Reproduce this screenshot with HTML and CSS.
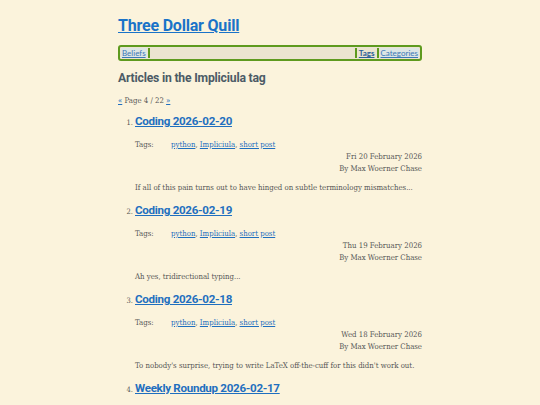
FILE: index.html
```html
<!DOCTYPE html>
<html>
<head>
<meta charset="utf-8">
<link rel="stylesheet" href="styles.css">
</head>
<body>
<div class="page">
  <header class="site-head">
    <h1 class="site-title"><a href="#">Three Dollar Quill</a></h1>
    <nav class="nav">
      <a class="nav-link" href="#">Beliefs</a>
      <span class="sep"></span>
      <span class="spacer"></span>
      <span class="sep"></span>
      <a class="nav-link current" href="#">Tags</a>
      <span class="sep"></span>
      <a class="nav-link" href="#">Categories</a>
    </nav>
  </header>
  <h2 class="page-heading">Articles in the Impliciula tag</h2>
  <p class="pager"><a href="#">«</a> Page 4 / 22 <a href="#">»</a></p>
  <ol class="articles">
    <li class="article">
      <h3 class="article-title"><a href="#">Coding 2026-02-20</a></h3>
      <div class="tags"><span class="tags-label">Tags:</span><span><a href="#">python</a>, <a href="#">Impliciula</a>, <a href="#">short post</a></span></div>
      <div class="meta">Fri 20 February 2026</div>
      <div class="meta">By Max Woerner Chase</div>
      <p class="summary">If all of this pain turns out to have hinged on subtle terminology mismatches...</p>
    </li>
    <li class="article">
      <h3 class="article-title"><a href="#">Coding 2026-02-19</a></h3>
      <div class="tags"><span class="tags-label">Tags:</span><span><a href="#">python</a>, <a href="#">Impliciula</a>, <a href="#">short post</a></span></div>
      <div class="meta">Thu 19 February 2026</div>
      <div class="meta">By Max Woerner Chase</div>
      <p class="summary">Ah yes, tridirectional typing...</p>
    </li>
    <li class="article">
      <h3 class="article-title"><a href="#">Coding 2026-02-18</a></h3>
      <div class="tags"><span class="tags-label">Tags:</span><span><a href="#">python</a>, <a href="#">Impliciula</a>, <a href="#">short post</a></span></div>
      <div class="meta">Wed 18 February 2026</div>
      <div class="meta">By Max Woerner Chase</div>
      <p class="summary">To nobody's surprise, trying to write LaTeX off-the-cuff for this didn't work out.</p>
    </li>
    <li class="article">
      <h3 class="article-title"><a href="#">Weekly Roundup 2026-02-17</a></h3>
    </li>
  </ol>
</div>
</body>
</html>
```
FILE: styles.css
```css
html, body {
  margin: 0;
  padding: 0;
  background: #fbf3dc;
}
body {
  font-family: "DejaVu Serif Condensed", "DejaVu Serif", serif;
  font-stretch: condensed;
  color: #575757;
  font-size: 7.75px;
}
.page {
  width: 304px;
  margin: 0 auto;
  padding-top: 14px;
}
a { color: #1f6fbf; }
.site-title {
  margin: 0 0 7px 0;
  font-family: "Roboto", sans-serif;
  font-stretch: normal;
  font-size: 16px;
  font-weight: 700;
  line-height: 24px;
  letter-spacing: -0.2px;
}
.site-title a { color: #1a73c8; }
.nav {
  display: flex;
  align-items: center;
  border: 2px solid #5e9a1e;
  border-radius: 3px;
  background: #ebe4cf;
  height: 12px;
  padding: 0 1px;
  font-family: "Lato", sans-serif;
  font-stretch: normal;
  font-size: 8px;
}
.nav-link {
  padding: 0 1px;
  line-height: 10px;
  background: #dde6e4;
  color: #3b78b6;
}
.nav-link.current {
  font-weight: 700;
  background: none;
  color: #2a5f98;
}
.sep {
  width: 2px;
  height: 10px;
  background: #5e9a1e;
  margin: 0 1px;
}
.spacer { flex: 1; }
.page-heading {
  margin: 9px 0 0 0;
  font-family: "Roboto", sans-serif;
  font-stretch: normal;
  font-size: 12.2px;
  font-weight: 700;
  line-height: 16px;
  color: #4c5b66;
  letter-spacing: -0.2px;
}
.pager {
  margin: 10px 0 0 0;
  line-height: 10px;
}
.articles {
  margin: 6px 0 0 0;
  padding-left: 17px;
}
.article {
  margin-bottom: 7px;
}
.article::marker {
  font-size: 7.5px;
  color: #575757;
}
.article-title {
  margin: 0 0 9px 0;
  font-family: "Roboto", sans-serif;
  font-stretch: normal;
  font-size: 11.6px;
  font-weight: 700;
  line-height: 18px;
  letter-spacing: -0.3px;
}
.tags {
  display: flex;
  line-height: 12px;
}
.tags-label { width: 36px; }
.meta {
  text-align: right;
  line-height: 12px;
}
.summary {
  margin: 7px 0 0 0;
  line-height: 12px;
}
```
